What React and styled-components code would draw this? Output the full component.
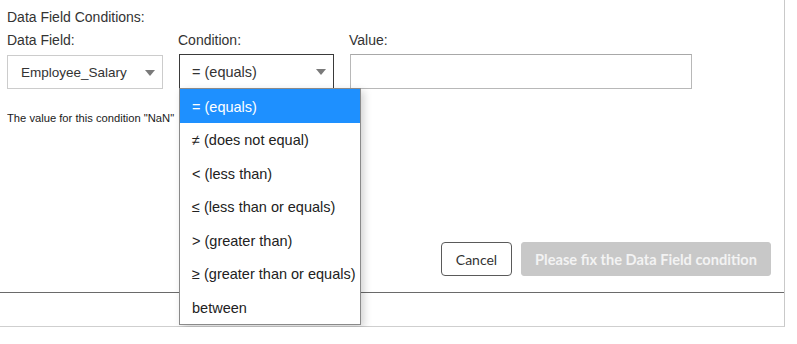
import React from 'react'
import styled, { createGlobalStyle } from 'styled-components'

const GlobalStyle = createGlobalStyle`
  html, body {
    margin: 0;
    padding: 0;
    background: #fff;
    font-family: "Liberation Sans", Arial, sans-serif;
  }
`

const conditions = [
  '= (equals)',
  '≠ (does not equal)',
  '< (less than)',
  '≤ (less than or equals)',
  '> (greater than)',
  '≥ (greater than or equals)',
  'between',
]

const Dialog = styled.div`
  width: 784px;
  border-right: 1px solid #c9c9c9;
  border-bottom: 1px solid #cfcfcf;
`
const Body = styled.div`
  height: 293px;
  box-sizing: border-box;
  padding: 6px 0 16px 7px;
  display: flex;
  flex-direction: column;
  border-bottom: 1px solid #6a6a6a;
`
const Footer = styled.div`
  height: 33px;
`
const Title = styled.div`
  font-size: 14px;
  line-height: 22px;
  color: #333;
`
const Grid = styled.div`
  display: grid;
  grid-template-columns: 156px 155px 342px;
  column-gap: 16px;
  margin-top: 1px;
`
const Label = styled.div`
  font-size: 14px;
  line-height: 22px;
  color: #333;
  margin-left: ${p => p.$shift || 0}px;
  margin-bottom: 3px;
`
const SelectBox = styled.div`
  position: relative;
  box-sizing: border-box;
  height: ${p => (p.$focused ? 35 : 34)}px;
  margin-top: ${p => (p.$focused ? 0 : 1)}px;
  border: 1px solid ${p => (p.$focused ? '#3a3a3a' : '#cccccc')};
  display: flex;
  align-items: center;
  justify-content: space-between;
  padding: 0 7px 0 ${p => (p.$focused ? 12 : 13)}px;
  font-size: ${p => (p.$focused ? 14.5 : 13.5)}px;
  color: #333;
  background: #fff;
`
const Arrow = styled.span`
  width: 0;
  height: 0;
  border-left: 5px solid transparent;
  border-right: 5px solid transparent;
  border-top: 6px solid #7a7a7a;
  margin-top: 1px;
`
const ValueInput = styled.div`
  box-sizing: border-box;
  height: 35px;
  border: 1px solid #b8b8b8;
  border-top-color: #a8a8a8;
  background: #fff;
`
const Menu = styled.ul`
  position: absolute;
  top: 100%;
  left: -1px;
  width: 182px;
  margin: 0;
  padding: 0;
  list-style: none;
  box-sizing: border-box;
  border: 1px solid #8a8a8a;
  background: #fff;
  box-shadow: 3px 3px 8px rgba(0, 0, 0, 0.18);
  z-index: 5;
`
const Option = styled.li`
  height: 33.5px;
  box-sizing: border-box;
  display: flex;
  align-items: center;
  padding: 2px 0 0 12px;
  font-size: 14.5px;
  color: ${p => (p.$active ? '#fff' : '#222')};
  background: ${p => (p.$active ? '#1e90ff' : '#fff')};
  white-space: nowrap;
`
const Hint = styled.div`
  margin-top: 23px;
  width: 171px;
  font-size: 11.2px;
  line-height: 12px;
  color: #1a1a1a;
  white-space: nowrap;
  overflow: hidden;
`
const Actions = styled.div`
  margin-top: auto;
  display: flex;
  justify-content: flex-end;
  gap: 9px;
  padding-right: 13px;
`
const Button = styled.button`
  box-sizing: border-box;
  height: 34px;
  padding: 0;
  font-family: Lato, "Open Sans", sans-serif;
  font-size: ${p => (p.$disabled ? 14.6 : 14)}px;
  font-weight: ${p => (p.$disabled ? 700 : 400)};
  border-radius: ${p => (p.$disabled ? 3 : 4)}px;
  border: 1px solid ${p => (p.$disabled ? '#c8c8c8' : '#5a5a5a')};
  background: ${p => (p.$disabled ? '#c8c8c8' : '#fff')};
  color: ${p => (p.$disabled ? '#f3f3f3' : '#333')};
  width: ${p => p.$w}px;
`

export default function App() {
  return (
    <>
      <GlobalStyle />
      <Dialog>
        <Body>
          <Title>Data Field Conditions:</Title>
          <Grid>
            <Label>Data Field:</Label>
            <Label $shift={-1}>Condition:</Label>
            <Label $shift={-1}>Value:</Label>
            <SelectBox>
              Employee_Salary
              <Arrow />
            </SelectBox>
            <SelectBox $focused>
              = (equals)
              <Arrow />
              <Menu>
                {conditions.map((c, i) => (
                  <Option key={c} $active={i === 0}>{c}</Option>
                ))}
              </Menu>
            </SelectBox>
            <ValueInput />
          </Grid>
          <Hint>The value for this condition "NaN"</Hint>
          <Actions>
            <Button $w={71}>Cancel</Button>
            <Button $disabled $w={250}>Please fix the Data Field condition</Button>
          </Actions>
        </Body>
        <Footer />
      </Dialog>
    </>
  )
}
